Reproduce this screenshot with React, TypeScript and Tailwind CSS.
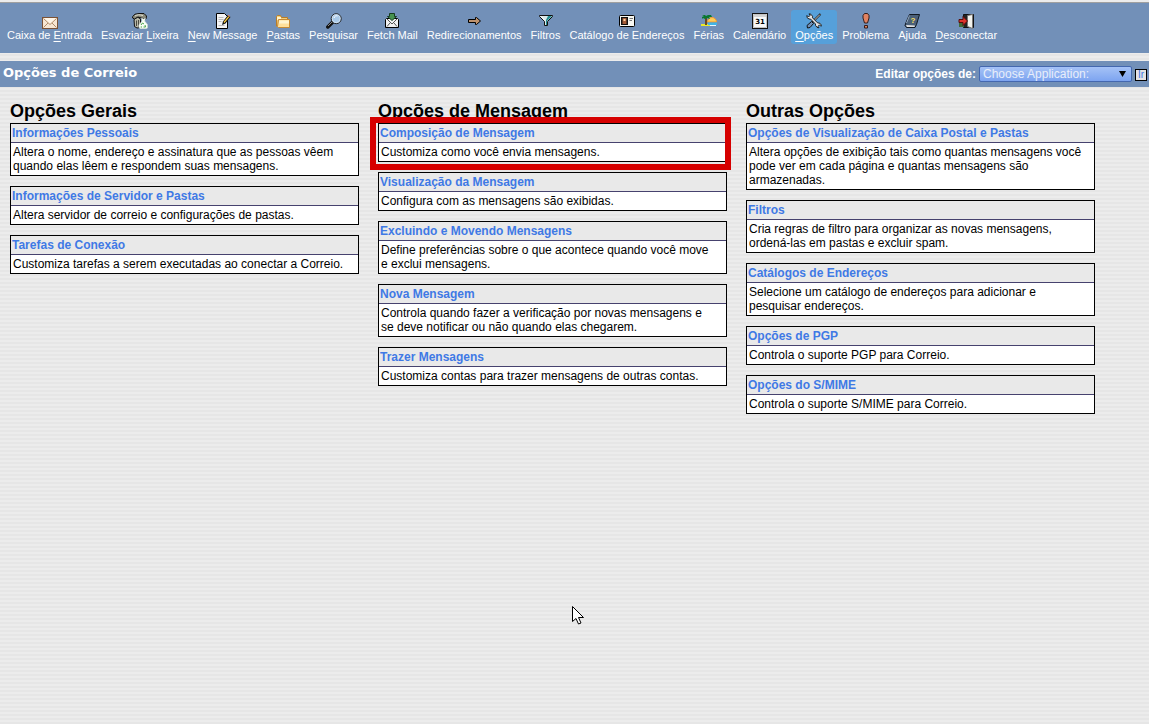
import type { ReactNode } from "react";

type MenuEntry = {
  before: string;
  key?: string;
  after?: string;
  icon: ReactNode;
  active?: boolean;
};

type Option = { title: string; text: string; highlighted?: boolean };
type Group = { heading: string; options: Option[] };

function Icon({ children }: { children: ReactNode }) {
  return (
    <svg width="16" height="16" viewBox="0 0 16 16" aria-hidden="true" className="mx-auto block">
      {children}
    </svg>
  );
}

const menu: MenuEntry[] = [
  {
    before: "Caixa de ",
    key: "E",
    after: "ntrada",
    icon: (
      <Icon>
        <rect x=".5" y="4.5" width="15" height="11" fill="#f7e6d2" stroke="#7a5236" />
        <path d="M1.5 5.5 8 11.5 14.5 5.5M1.5 14.5 6 10M14.5 14.5 10 10" fill="none" stroke="#b08c6a" />
        <path d="M2 5h12L8 10.5z" fill="#fff6e8" />
      </Icon>
    ),
  },
  {
    before: "Esvaziar ",
    key: "L",
    after: "ixeira",
    icon: (
      <Icon>
        <path d="M2 6.500 5.500 4l3 2v8.500L5 15l-2.500-1.500z" fill="#b9b9a8" stroke="#111" />
        <path d="M4.500 7.500V13M6.500 7v7" stroke="#4a4a42" />
        <path d="M.6 3.500 3 1.200 7 .5h5l2.500 2.500-.5 3-3-.5-5-1.500-3.500 2L.6 5z" fill="#8c8c7c" stroke="#111" />
        <path d="M3 3c2-1.500 5-1.500 8-.5" stroke="#e6e6da" fill="none" />
        <path d="m9.500 5 2 1 2-1-.8 3 2.800 3.500V15L14 15.700H8L6.800 14v-2L10 8z" fill="#f7fdf5" stroke="#cfd8cc" strokeWidth=".5" />
        <path d="m9 12 1.500-2 1.500 1M13 12l.5 2h-2M10 14H8.700" stroke="#4aa54c" fill="none" />
      </Icon>
    ),
  },
  {
    before: "",
    key: "N",
    after: "ew Message",
    icon: (
      <Icon>
        <path d="M1.500.5h8l3 3v12h-11z" fill="#f5f5f5" stroke="#000" />
        <path d="M3.500 4.500h5M3.500 6.500h5M3.500 8.500h3M3.500 12.500h6" stroke="#bbb" />
        <path d="m7 12 1-3.500L13 2l2.500 2-5 6.500z" fill="#111" />
        <path d="m8.500 9 4.800-5.700 1 .8L9.500 10z" fill="#ffcf3e" />
        <path d="m13 2 2 1.700" stroke="#de7d64" />
      </Icon>
    ),
  },
  {
    before: "",
    key: "P",
    after: "astas",
    icon: (
      <Icon>
        <path d="M1.500 13.500V3.500l1-1h3l1 2h6v2" fill="#f2cf7c" stroke="#b87d2a" />
        <path d="M2 4h4v3H2z" fill="#fff3cd" />
        <path d="M3.500 6.500h11v8h-11l-1-1z" fill="#ffe09a" stroke="#c58a35" />
        <path d="M4 7.500h10v3H4z" fill="#fff4cf" />
      </Icon>
    ),
  },
  {
    before: "Pes",
    key: "q",
    after: "uisar",
    icon: (
      <Icon>
        <path d="m1.800 14 5-5" stroke="#111" strokeWidth="3.500" strokeLinecap="round" />
        <path d="m2 13 4-4" stroke="#888" />
        <circle cx="10.200" cy="5.700" r="5" fill="#a9c9e8" stroke="#222" />
        <circle cx="10.200" cy="5.700" r="4" fill="none" stroke="#dceaf6" strokeWidth=".7" />
        <path d="M8 5c.5-2 2-2.500 3.500-2" stroke="#fff" fill="none" />
      </Icon>
    ),
  },
  {
    before: "Fetch Mail",
    icon: (
      <Icon>
        <path d="M2.500 5.500h11l1 1v8h-13v-8z" fill="#f1f1f1" stroke="#000" />
        <path d="m3 6 5 5 5-5M3 13.500 6 10M13 13.500 10 10" fill="none" stroke="#555" />
        <path d="M5.500.5h5v3h2L8 7.500 3.500 3.500h2z" fill="#479350" stroke="#173d20" />
      </Icon>
    ),
  },
  {
    before: "Redirecionamentos",
    icon: (
      <Icon>
        <path d="M2.500 6.500h7v-2h1l4 3.500-4 3.500h-1v-2h-7z" fill="#bd916c" stroke="#000" />
      </Icon>
    ),
  },
  {
    before: "Filtros",
    icon: (
      <Icon>
        <path d="M1.500 2.500h13v1l-5 5v4h-3v-4l-5-5z" fill="#dce9e9" stroke="#111" />
        <path d="M10 3h4L9 8v4H8V7z" fill="#238d91" />
        <path d="m3 3.500 4 4" stroke="#fff" />
      </Icon>
    ),
  },
  {
    before: "Catálogo de Endereços",
    icon: (
      <Icon>
        <rect x=".5" y="2.500" width="15" height="11" rx="1" fill="#f8f8f2" stroke="#000" />
        <path d="M2 4h7v8H2z" fill="#111" />
        <path d="M3.500 5h4v6h-4z" fill="#a45c38" />
        <path d="M4.500 6h2v2h-2z" fill="#ffd0a0" />
        <path d="M10.500 5.500H14M10.500 7.500h2.500" stroke="#777" />
      </Icon>
    ),
  },
  {
    before: "Férias",
    icon: (
      <Icon>
        <path d="M0 11h11v2H0z" fill="#e9e82a" />
        <path d="M6.500 9a4.500 4.500 0 0 1 9 0z" fill="#ffcd58" stroke="#ee9b31" />
        <path d="M7 9.500h9V12H7z" fill="#41b5e7" />
        <path d="M9 12h6v1H9z" fill="#eaf9ff" />
        <path d="M5 5v7" stroke="#674a20" strokeWidth="2" />
        <path d="M1 6V4l2-1-2-1h3l1 1 2-1h3l1 2-3 0 1 2-3-1-2 1-2-1z" fill="#087830" />
      </Icon>
    ),
  },
  {
    before: "Calendário",
    icon: (
      <Icon>
        <rect x=".5" y=".5" width="15" height="15" fill="#f8f8f8" stroke="#111" />
        <path d="M1.500 14.500v-13h13v13z" fill="none" stroke="#c4c4c4" />
        <path d="M2 2h12v2H2z" fill="#d4d4d4" />
        <text x="8" y="11" textAnchor="middle" fontSize="7" fontWeight="700" fontFamily="DejaVu Sans, sans-serif">
          31
        </text>
      </Icon>
    ),
  },
  {
    before: "",
    key: "O",
    after: "pções",
    active: true,
    icon: (
      <Icon>
        <path d="m14.500 1-8 8" stroke="#111" strokeWidth="2" />
        <path d="m14 1.500-6 6" stroke="#ddd" />
        <path d="M1 2.500 2.500 4 4 2.500 3 .8l2 .5 1.500 2v1.500l5 5 2.500.5 1.500 2-.5 1-1.500-1.500-1.500 1.500 1 1.500-2-.5-1.500-2V11l-5-5L3 6 1 4.500z" fill="#e5e5e5" stroke="#111" strokeWidth=".9" />
        <path d="m5.500 8.500 2 2-3.500 4-2.500.5-.5-2.500z" fill="#6f91b9" stroke="#111" />
      </Icon>
    ),
  },
  {
    before: "Problema",
    icon: (
      <Icon>
        <path d="m6.500.5-1.500 2V5l1.500 5h3L11 5V2.500L9.500.5z" fill="#e18261" stroke="#351d19" />
        <path d="M6.500 12.500h3v2.500h-3z" fill="#e18261" stroke="#351d19" />
      </Icon>
    ),
  },
  {
    before: "Ajuda",
    icon: (
      <Icon>
        <path d="M5.500 1.500h10l-3 10-1.500 3H2.500l-1.500-2 1-3z" fill="#4b6078" stroke="#101822" />
        <path d="m2 12 9 .5-.5 1.500H3z" fill="#e2e2e2" />
        <path d="M5.500 2.500 2.500 10" stroke="#91a7c0" />
        <text x="9" y="9.500" textAnchor="middle" fontSize="8" fontWeight="700" fill="#ffe05e" fontFamily="Liberation Sans, sans-serif">
          ?
        </text>
      </Icon>
    ),
  },
  {
    before: "",
    key: "D",
    after: "esconectar",
    icon: (
      <Icon>
        <path d="M5.500 1.500h10v13h-10z" fill="#222" stroke="#111" />
        <path d="M1 10h5v4H1z" fill="#406b37" />
        <path d="m9.500 2.500 5-1v14l-5-2z" fill="#f3f3ed" stroke="#777" />
        <path d="M1 6.500h4v-3L9.500 8 5 12.500v-3H1z" fill="#dd332b" stroke="#540e0c" />
      </Icon>
    ),
  },
];

const groups: Group[] = [
  {
    heading: "Opções Gerais",
    options: [
      {
        title: "Informações Pessoais",
        text: "Altera o nome, endereço e assinatura que as pessoas vêem quando elas lêem e respondem suas mensagens.",
      },
      { title: "Informações de Servidor e Pastas", text: "Altera servidor de correio e configurações de pastas." },
      { title: "Tarefas de Conexão", text: "Customiza tarefas a serem executadas ao conectar a Correio." },
    ],
  },
  {
    heading: "Opções de Mensagem",
    options: [
      { title: "Composição de Mensagem", text: "Customiza como você envia mensagens.", highlighted: true },
      { title: "Visualização da Mensagem", text: "Configura com as mensagens são exibidas." },
      {
        title: "Excluindo e Movendo Mensagens",
        text: "Define preferências sobre o que acontece quando você move e exclui mensagens.",
      },
      {
        title: "Nova Mensagem",
        text: "Controla quando fazer a verificação por novas mensagens e se deve notificar ou não quando elas chegarem.",
      },
      { title: "Trazer Mensagens", text: "Customiza contas para trazer mensagens de outras contas." },
    ],
  },
  {
    heading: "Outras Opções",
    options: [
      {
        title: "Opções de Visualização de Caixa Postal e Pastas",
        text: "Altera opções de exibição tais como quantas mensagens você pode ver em cada página e quantas mensagens são armazenadas.",
      },
      {
        title: "Filtros",
        text: "Cria regras de filtro para organizar as novas mensagens, ordená-las em pastas e excluir spam.",
      },
      {
        title: "Catálogos de Endereços",
        text: "Selecione um catálogo de endereços para adicionar e pesquisar endereços.",
      },
      { title: "Opções de PGP", text: "Controla o suporte PGP para Correio." },
      { title: "Opções do S/MIME", text: "Controla o suporte S/MIME para Correio." },
    ],
  },
];

function MenuBar() {
  return (
    <nav className="flex gap-px border-t border-[#a0a0a0] bg-[#7290b8] pt-[7px] pb-[9px] pl-[3px]">
      {menu.map((m) => (
        <a
          key={m.before + (m.key ?? "")}
          href="#"
          className={`shrink-0 rounded-[3px] px-1 pt-[3px] pb-[2px] text-[11px] leading-[13px] whitespace-nowrap text-white ${
            m.active ? "bg-[#56a0da]" : ""
          }`}
        >
          {m.icon}
          {m.before}
          {m.key && <span className="underline underline-offset-2">{m.key}</span>}
          {m.after}
        </a>
      ))}
    </nav>
  );
}

function TitleBar() {
  return (
    <header className="mt-2 flex h-[26px] items-center bg-[#7290b8] pr-[2px] pl-[3px] text-white">
      <h1 className="pb-[2px] font-['DejaVu_Sans',Verdana,sans-serif] text-[13px] leading-4 font-bold">Opções de Correio</h1>
      <form className="ml-auto flex items-center text-[12px]" onSubmit={(e) => e.preventDefault()}>
        <label htmlFor="app" className="mr-[3px] font-bold">
          Editar opções de:
        </label>
        <span className="relative">
          <select
            id="app"
            className="block h-4 w-[153px] appearance-none rounded-[2px] border border-[#4468b0] bg-linear-to-b from-[#a5c2f6] to-[#7da4f0] pl-[3px] text-[12px] leading-[14px] text-[#e8eefa]"
          >
            <option>Choose Application:</option>
          </select>
          <svg width="7" height="6" viewBox="0 0 7 6" aria-hidden="true" className="pointer-events-none absolute top-[5px] right-[6px]">
            <path d="M0 0h7L3.500 6z" fill="#000" />
          </svg>
        </span>
        <button type="submit" className="mt-[2px] ml-[3px] h-3 w-3 border border-black bg-[#e4e4e4] text-[10px] leading-[10px] text-[#3f79e5]">
          Ir
        </button>
      </form>
    </header>
  );
}

function OptionBox({ title, text, highlighted }: Option) {
  return (
    <section className="relative mb-[10px] border border-black bg-white">
      <h3 className="border-b border-[#46426e] bg-[#e9e9e9] py-[2px] pl-px text-[12px] leading-[14px] font-bold">
        <a href="#" className="text-[#3f79e5]">
          {title}
        </a>
      </h3>
      <p className="py-[2px] pr-[10px] pl-[2px] text-[12px] leading-[14px] text-black">{text}</p>
      {highlighted && (
        <div className="pointer-events-none absolute -top-[7px] -right-[5px] -bottom-[9px] -left-[9px] border-[6px] border-[#d60000]" />
      )}
    </section>
  );
}

export default function App() {
  return (
    <div className="min-h-screen bg-[repeating-linear-gradient(to_bottom,#ececec_0px,#ececec_2px,#e6e6e6_2px,#e6e6e6_4px)] pt-[2px] font-['Liberation_Sans',Arial,sans-serif]">
      <MenuBar />
      <TitleBar />
      <main className="grid grid-cols-3 gap-[19px] pt-[13px] pr-[54px] pl-[10px]">
        {groups.map((g) => (
          <div key={g.heading}>
            <h2 className="pb-px text-[18px] leading-[22px] font-bold text-black">{g.heading}</h2>
            {g.options.map((o) => (
              <OptionBox key={o.title} {...o} />
            ))}
          </div>
        ))}
      </main>
      {/* mouse pointer */}
      <svg width="13" height="20" viewBox="0 0 13 20" aria-hidden="true" className="absolute top-[605px] left-[571px]">
        <path d="M1.500 1.500v15l3.500-3 2.500 5.500 2.500-1-2.500-5.500h5z" fill="#fff" stroke="#000" />
      </svg>
    </div>
  );
}
